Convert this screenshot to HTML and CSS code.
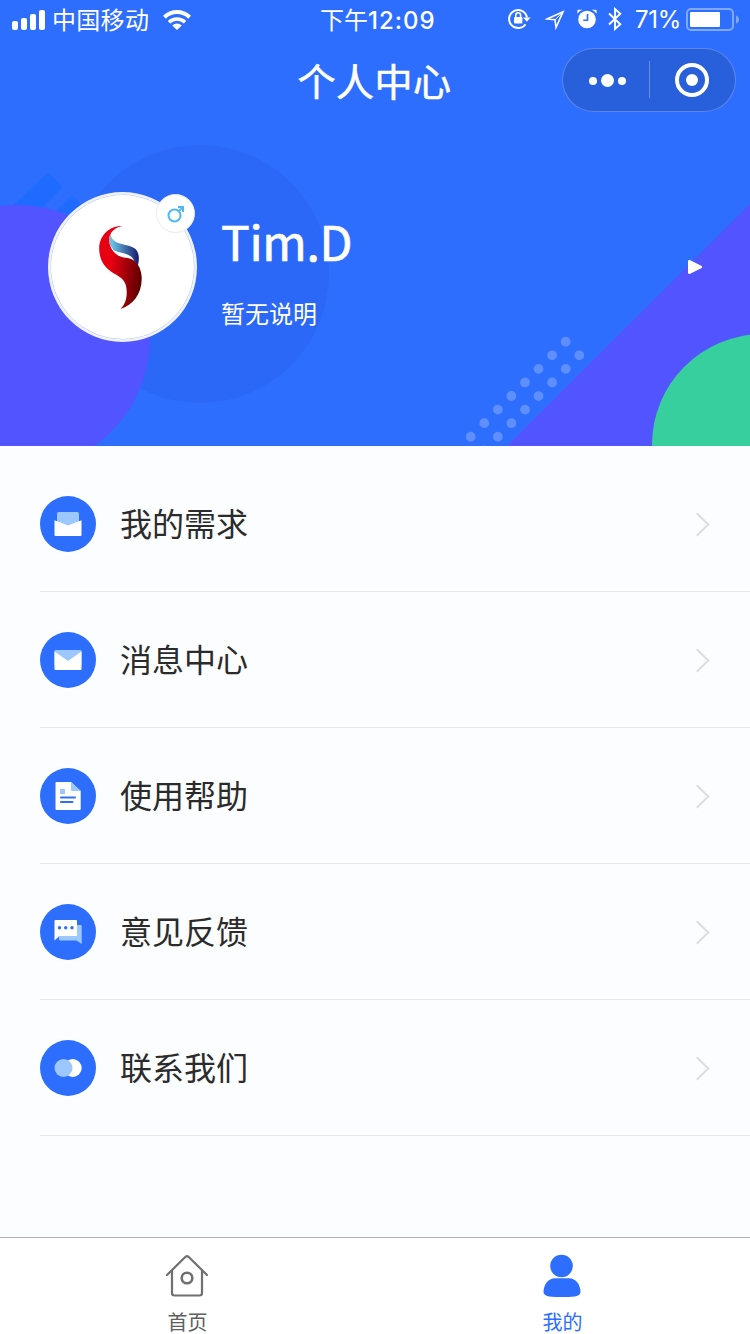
FILE: index.html
```
<!DOCTYPE html>
<html lang="zh-CN">

<head>
    <meta charset="UTF-8">
    <title>个人中心</title>

    <link rel="stylesheet" href="styles.css">
</head>

<body>
    <header class="hero">
        <svg class="hero-bg" width="750" height="446" viewBox="0 0 750 446">
            <circle cx="200" cy="274" r="129" fill="#2b68f7" />
            <path d="M48 172L63 187L30 220H-2Z M72 195L84 207L70 221H46Z" fill="#1f6bff" />
            <circle cx="17" cy="338" r="133" fill="#5254ff" />
            <path d="M750 204V446H507Z" fill="#5254ff" />
            <circle cx="763" cy="445" r="111" fill="#38cf9f" />
            <g stroke="#5f8eff" stroke-width="9.8" stroke-linecap="round">
                <path d="M565.7 341.7L470 437.4" stroke-dasharray="0 19.2" />
                <path d="M579.3 355.3L483 451.6" stroke-dasharray="0 19.2" />
            </g>
        </svg>

        <div class="status-bar">
            <div class="status-left">
                <svg width="33" height="20" viewBox="0 0 33 20" fill="#fff">
                    <rect x="0" y="11" width="6" height="9" rx="2" />
                    <rect x="9" y="8" width="6" height="12" rx="2" />
                    <rect x="18" y="4" width="6" height="16" rx="2" />
                    <rect x="27" y="0" width="6" height="20" rx="2" />
                </svg>
                <span class="carrier">中国移动</span>
                <svg width="28" height="20" viewBox="0 0 28 20" fill="none" stroke="#fff" stroke-width="4">
                    <path d="M1.4 7.2A18 18 0 0 1 26.6 7.2" />
                    <path d="M6 12.2A11.5 11.5 0 0 1 22 12.2" stroke-width="3.6" />
                    <path d="M9.2 15.5A7 7 0 0 1 18.8 15.5L14 20Z" fill="#fff" stroke="none" />
                </svg>
            </div>
            <div class="status-time">下午<span class="num">12:09</span></div>
            <div class="status-right">
                <svg class="lock" width="23" height="21" viewBox="0 0 23 21">
                    <path d="M17.5 16.2A9 9 0 1 1 19 9.5" fill="none" stroke="#fff" stroke-width="2" />
                    <path d="M15 9.5H22.5L18.8 13.8Z" fill="#fff" />
                    <rect x="6" y="9" width="8.4" height="6.5" rx="1" fill="#fff" />
                    <path d="M7.8 9.5V7.2A2.4 2.4 0 0 1 12.6 7.2V9.5" fill="none" stroke="#fff" stroke-width="1.6" />
                </svg>
                <svg class="location" width="20" height="20" viewBox="0 0 20 20">
                    <path d="M2 9L18 1.8L11 17.5L10 9.8Z" fill="none" stroke="#fff" stroke-width="1.6" />
                    <path d="M10 9.8L18 1.8" stroke="#fff" stroke-width="1" />
                </svg>
                <svg class="alarm" width="20" height="20" viewBox="0 0 20 20">
                    <circle cx="10" cy="10.5" r="8.8" fill="#fff" />
                    <path d="M.4 4.8V1.8Q.4 .8 1.4 .8H5.4Q2.4 2 .4 4.8Z M19.6 4.8V1.8Q19.6 .8 18.6 .8H14.6Q17.6 2 19.6 4.8Z" fill="#fff" />
                    <path d="M10.5 5V11.2H6.3" fill="none" stroke="#2e6eff" stroke-width="1.6" />
                </svg>
                <svg class="bluetooth" width="14" height="24" viewBox="0 0 14 24" fill="none" stroke="#fff" stroke-width="1.9">
                    <path d="M1 6.5L12.3 17.2L7 22V2L12.3 6.8L1 17.5" />
                </svg>
                <span class="battery-text">71%</span>
                <svg class="battery" width="54" height="23" viewBox="0 0 54 23">
                    <rect x="1" y="1" width="46" height="21" rx="4" fill="none" stroke="#fff" stroke-opacity=".4" stroke-width="2" />
                    <rect x="4" y="4" width="30" height="15" rx="1" fill="#fff" />
                    <path d="M50 7.5Q53 8.5 53 11.5T50 15.5Z" fill="#fff" fill-opacity=".4" />
                </svg>
            </div>
        </div>

        <div class="nav-bar">
            <h1>个人中心</h1>
            <div class="capsule">
                <svg width="172" height="62" viewBox="0 0 172 62" fill="#fff">
                    <circle cx="30" cy="32" r="4" />
                    <circle cx="44.5" cy="31.5" r="6.5" />
                    <circle cx="59" cy="32" r="4" />
                    <rect x="86" y="12" width="1" height="37" fill-opacity=".3" />
                    <circle cx="129" cy="31" r="15" fill="none" stroke="#fff" stroke-width="4" />
                    <circle cx="129" cy="31" r="6" />
                </svg>
            </div>
        </div>

        <div class="profile">
            <div class="avatar">
                <svg width="143" height="144" viewBox="3 3 143 144">
                    <defs>
                        <linearGradient id="red" x1="0" x2="1" y1=".35" y2=".6">
                            <stop offset=".3" stop-color="#e60012" />
                            <stop offset="1" stop-color="#5c0000" />
                        </linearGradient>
                        <linearGradient id="blue" x1="0" x2="1">
                            <stop offset=".1" stop-color="#6bc1e3" />
                            <stop offset="1" stop-color="#16196f" />
                        </linearGradient>
                    </defs>
                    <path d="M62.7 41C60 47 60.5 53 66 58.5C73 61.5 82 61 85.5 67.5L89.7 74C91.5 68 91.5 61 87.5 57C83 53 74 53 68 50C64.5 48 62.5 45 62.7 41Z" fill="url(#blue)" />
                    <path d="M74 34C60 34 51 45 51.2 57C51.5 71 59 77 66 81.5C74 86 79 89 78.7 101C78.5 108 77 112 72.5 117C85 113 94 102 93.7 86C93.5 79 91 71 83.7 67.3C77 64.5 72 67 65.5 59.5C59 52 58 38 74 34Z" fill="url(#red)" />
                </svg>
                <span class="gender">
                    <svg width="18" height="18" viewBox="0 0 18 18" fill="none" stroke="#4cb7fb" stroke-width="2">
                        <circle cx="7.5" cy="10.5" r="6" />
                        <path d="M11.5 6.5L16 2M11 2H16V7" />
                    </svg>
                </span>
            </div>
            <div class="info">
                <div class="name">Tim.D</div>
                <div class="desc">暂无说明</div>
            </div>
            <svg class="more" width="14" height="14" viewBox="0 0 14 14">
                <path d="M1.5 1.5V12.5L12.5 7Z" fill="#fff" stroke="#fff" stroke-width="3" stroke-linejoin="round" />
            </svg>
        </div>
    </header>

    <ul class="menu">
        <li>
            <svg class="icon" viewBox="0 0 56 56">
                <circle cx="28" cy="28" r="28" fill="#2e6eff" />
                <rect x="17" y="16" width="22" height="20" rx="1.5" fill="#9dc7ff" />
                <path d="M14.5 24.2L28 29.5L41.5 24.2V39Q41.5 40 40.5 40H15.5Q14.5 40 14.5 39Z" fill="#fff" />
            </svg>
            <span>我的需求</span>
            <i class="arrow"></i>
        </li>
        <li>
            <svg class="icon" viewBox="0 0 56 56">
                <circle cx="28" cy="28" r="28" fill="#2e6eff" />
                <rect x="14.5" y="18" width="27" height="16" rx="1" fill="#9dc7ff" />
                <path d="M14.5 19.5L28 29L41.5 19.5V37Q41.5 38 40.5 38H15.5Q14.5 38 14.5 37Z" fill="#fff" />
            </svg>
            <span>消息中心</span>
            <i class="arrow"></i>
        </li>
        <li>
            <svg class="icon" viewBox="0 0 56 56">
                <circle cx="28" cy="28" r="28" fill="#2e6eff" />
                <path d="M16.5 14H31L40.7 23V41Q40.7 42 39.7 42H16.5Q15.5 42 15.5 41V15Q15.5 14 16.5 14Z" fill="#fff" />
                <path d="M31 14L40.7 23H32Q31 23 31 22Z" fill="#9dc7ff" />
                <rect x="20" y="21" width="5" height="5" fill="#9dc7ff" />
                <path d="M21 29.5H35M21 34H32.5" stroke="#2e6eff" stroke-width="2" stroke-linecap="round" />
            </svg>
            <span>使用帮助</span>
            <i class="arrow"></i>
        </li>
        <li>
            <svg class="icon" viewBox="0 0 56 56">
                <circle cx="28" cy="28" r="28" fill="#2e6eff" />
                <path d="M20 21H40.5Q41.7 21 41.7 22V40L36.5 36.5H20Q19 36.5 19 35.5Z" fill="#9dc7ff" />
                <path d="M15.5 16H36Q37 16 37 17V32H19.5L14.5 36.5V17Q14.5 16 15.5 16Z" fill="#fff" />
                <g fill="#2e6eff">
                    <circle cx="19.5" cy="23.7" r="1.7" />
                    <circle cx="25.7" cy="23.7" r="1.7" />
                    <circle cx="32" cy="23.7" r="1.7" />
                </g>
            </svg>
            <span>意见反馈</span>
            <i class="arrow"></i>
        </li>
        <li>
            <svg class="icon" viewBox="0 0 56 56">
                <circle cx="28" cy="28" r="28" fill="#2e6eff" />
                <circle cx="32.7" cy="28" r="9" fill="#fff" />
                <circle cx="23.5" cy="28" r="9" fill="#9dc7ff" />
            </svg>
            <span>联系我们</span>
            <i class="arrow"></i>
        </li>
    </ul>

    <footer class="tab-bar">
        <div class="tab">
            <svg width="44" height="44" viewBox="0 0 44 44" fill="none" stroke="#707070" stroke-width="2.2" stroke-linecap="round" stroke-linejoin="round">
                <path d="M2 22L20.5 3.8Q22 2.5 23.5 3.8L42 22" />
                <path d="M7 17.5V40Q7 42.5 9.5 42.5H34.5Q37 42.5 37 40V17.5" />
                <circle cx="22" cy="25" r="5.3" stroke-width="2.6" />
            </svg>
            <span>首页</span>
        </div>
        <div class="tab active">
            <svg width="44" height="44" viewBox="0 0 44 44" fill="#2e6eff">
                <circle cx="21.5" cy="13" r="11.3" />
                <path d="M15 25.2H29C36 25.2 40.5 32 40.5 39Q40.5 42.5 35 43.4Q22 44.5 9 43.4Q3.5 42.5 3.5 39C3.5 32 8 25.2 15 25.2Z" />
            </svg>
            <span>我的</span>
        </div>
    </footer>
</body>

</html>
```
FILE: styles.css
```
* {
    box-sizing: border-box;
}

body {
    margin: 0;
    width: 750px;
    height: 1334px;
    display: flex;
    flex-direction: column;
    background-color: #fcfdff;
    font-family: "Noto Sans CJK SC", sans-serif;
    overflow: hidden;
}

svg {
    display: block;
    flex-shrink: 0;
}

.hero {
    position: relative;
    height: 446px;
    background-color: #2e6eff;
    color: #fff;
    overflow: hidden;
}

.hero-bg {
    position: absolute;
    top: 0;
    left: 0;
}

.status-bar {
    position: relative;
    height: 40px;
    padding: 0 10px 0 12px;
    display: grid;
    grid-template-columns: 308px auto 1fr;
    align-items: center;
    font-size: 24px;
    line-height: 38px;
}

.status-left,
.status-right {
    display: flex;
    align-items: center;
}

.status-left svg {
    margin-bottom: 1px;
}

.status-right {
    justify-content: flex-end;
}

.carrier {
    margin: 0 14px 0 7px;
    padding-bottom: 2px;
    letter-spacing: 0.3px;
}

.status-time {
    white-space: nowrap;
}

.num {
    font-family: Inter, sans-serif;
    font-weight: 500;
    letter-spacing: 1px;
}

.lock {
    margin-bottom: 3px;
}

.location {
    margin-left: 14px;
}

.alarm {
    margin-left: 12px;
    margin-bottom: 2px;
}

.bluetooth {
    margin-left: 11px;
    margin-bottom: 2px;
}

.battery-text {
    margin: 0 6px 0 13px;
    width: 45px;
    font-family: Inter, sans-serif;
    font-weight: 400;
    font-size: 24px;
    letter-spacing: -0.3px;
}

.battery {
    margin-bottom: 1px;
}

.nav-bar {
    position: relative;
    height: 88px;
    padding-right: 14px;
    display: grid;
    grid-template-columns: 1fr auto 1fr;
}

.nav-bar h1 {
    grid-column: 2;
    margin: 0;
    padding-left: 13px;
    font-size: 38px;
    font-weight: 400;
    line-height: 80px;
    letter-spacing: 0.5px;
    -webkit-text-stroke: 0.6px #fff;
}

.capsule {
    justify-self: end;
    width: 174px;
    height: 64px;
    margin-top: 8px;
    border: 1px solid rgba(255, 255, 255, 0.25);
    border-radius: 32px;
    background-color: #285fdb;
}

.profile {
    position: relative;
    display: flex;
    align-items: center;
    height: 150px;
    margin-top: 64px;
    padding: 0 48px;
}

.avatar {
    position: relative;
    width: 149px;
    height: 150px;
    padding: 1px;
    border: 2px solid #f0f1f5;
    border-radius: 50%;
    background-color: #fff;
}

.avatar > svg {
    border-radius: 50%;
    box-shadow: 0 0 0 0.5px #a9bdfa;
}

.gender {
    position: absolute;
    top: 0;
    right: 0;
    width: 39px;
    height: 39px;
    border: 1px solid #e8ebf3;
    border-radius: 50%;
    background-color: #fff;
    display: flex;
    align-items: center;
    justify-content: center;
}

.info {
    flex: 1;
    padding: 4px 0 0 24px;
}

.name {
    font-size: 48px;
    font-weight: 400;
    line-height: 64px;
    letter-spacing: -0.3px;
    -webkit-text-stroke: 0.7px #fff;
}

.desc {
    margin-top: 23px;
    font-size: 24px;
    line-height: 36px;
}

.menu {
    flex: 1;
    margin: 0;
    padding: 10px 0 0 40px;
    list-style: none;
}

.menu li {
    display: flex;
    align-items: center;
    height: 136px;
    padding-right: 44px;
    border-bottom: 1px solid #e6e8ec;
    color: #2b2b2b;
    font-size: 32px;
}

.menu span {
    padding-bottom: 3px;
}

.icon {
    width: 56px;
    height: 56px;
    margin-right: 24px;
}

.arrow {
    width: 17px;
    height: 17px;
    margin-left: auto;
    margin-top: 1px;
    border-top: 2px solid #dcdee3;
    border-right: 2px solid #dcdee3;
    transform: rotate(45deg);
}

.tab-bar {
    display: flex;
    height: 97px;
    border-top: 1px solid #b0b0b2;
    background-color: #fff;
}

.tab {
    flex: 1;
    display: flex;
    flex-direction: column;
    align-items: center;
    padding-top: 15px;
    color: #606060;
    font-size: 20px;
    line-height: 30px;
}

.tab svg {
    margin-right: 1px;
}

.tab span {
    margin-top: 10px;
}

.active {
    color: #2e6eff;
}
```
